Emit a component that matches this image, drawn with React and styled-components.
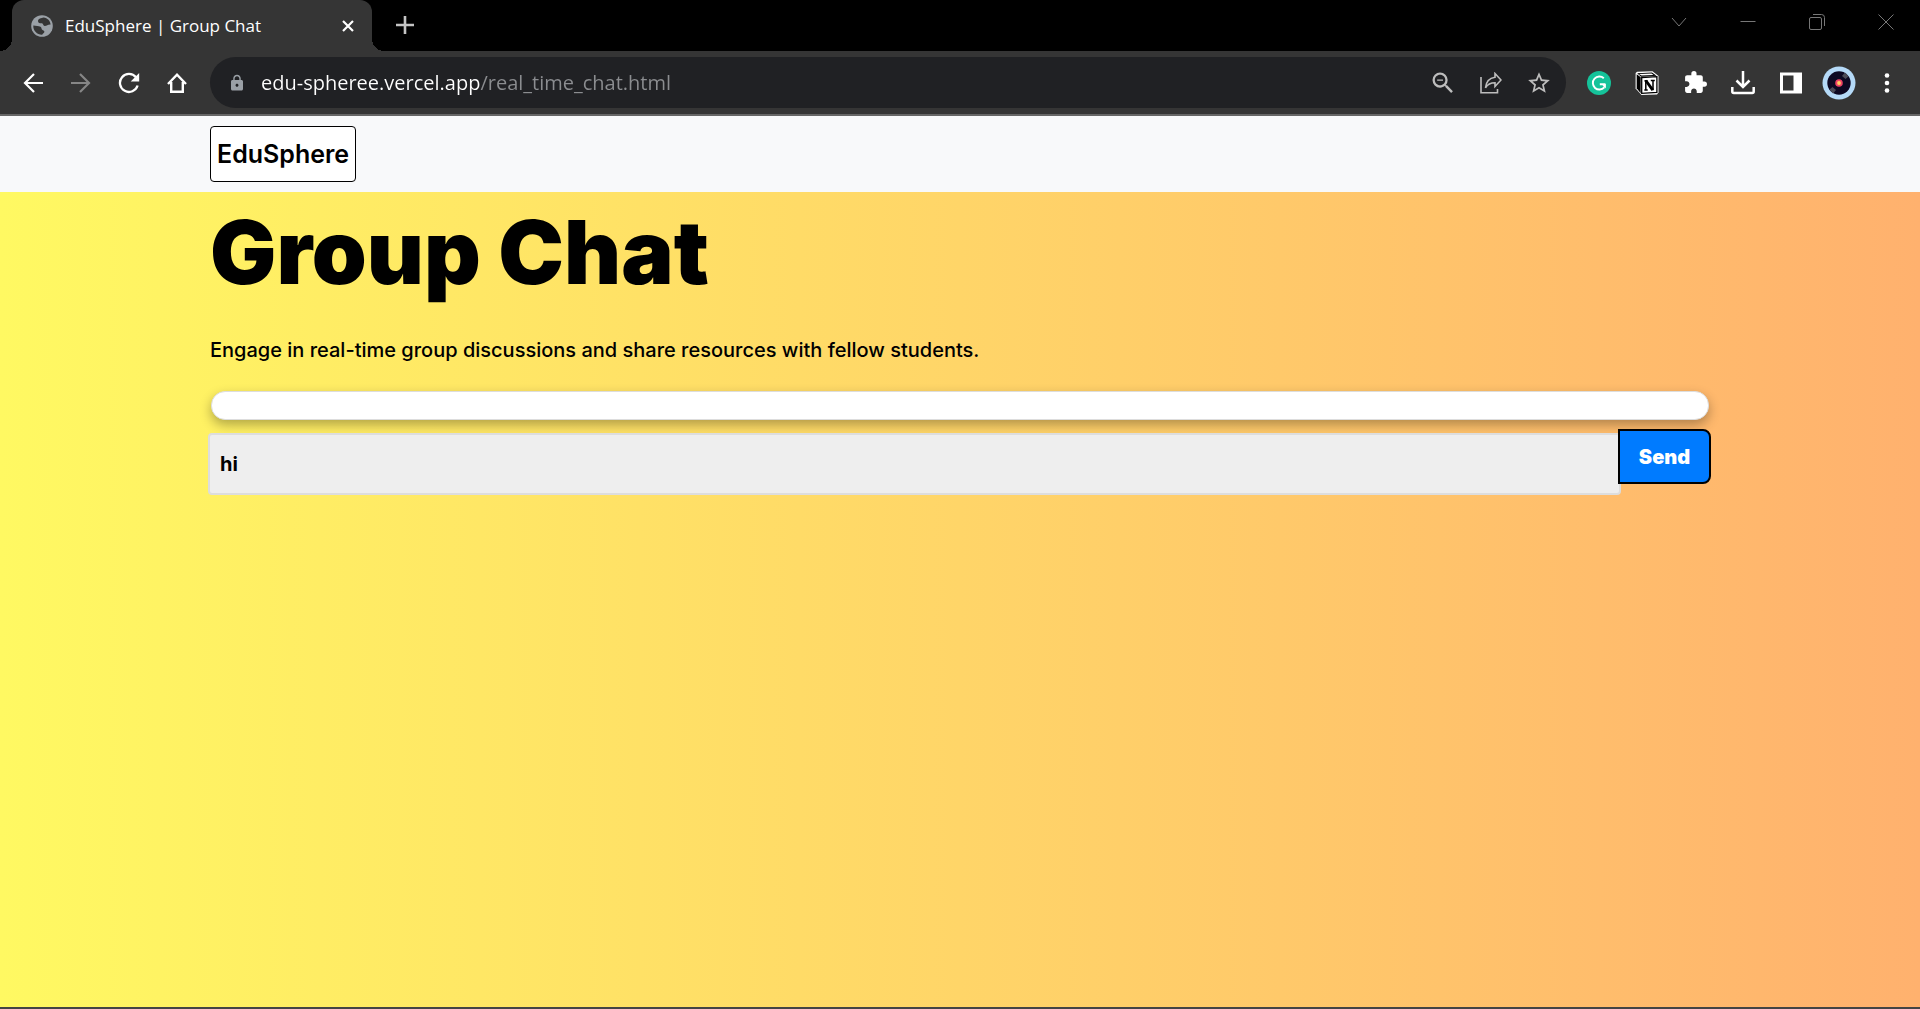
import React, { useState } from "react";
import styled, { createGlobalStyle, css } from "styled-components";
import {
    MdExtension,
    MdLock,
    MdRefresh,
    MdStarBorder,
    MdZoomOut,
} from "react-icons/md";

const URL_TEXT = "edu-spheree.vercel.app/real_time_chat.html";

function TabStrip() {
    return (
        <Strip>
            <Tab>
                <svg width="22" height="22" viewBox="0 0 22 22">
                    <circle cx="11" cy="11" r="10.800" fill="#9aa0a6" />
                    <path
                        d="M12.500 2.400c-2 .6-5.500 1-5.500 3.600 0 2 1.800 2.300 3.700 2.300 1.500 0 1.300 2.700 3 2.700 2.300 0 3-1.700 5.900-1.500C19.300 5.500 16.500 3 12.500 2.400z"
                        fill="#353535"
                    />
                    <path
                        d="M2.300 10.500c2.700.5 5.200.2 7.200 1.200 1.500.8.600 2.500 2 3.300 1.500.8 2.300 1 1.700 2.500-.4 1-1.700.8-1.900 2.200C6.500 20 2 16 2.300 10.500z"
                        fill="#353535"
                    />
                </svg>
                <span className="title">EduSphere | Group Chat</span>
                <IconButton $size={24} aria-label="Close tab">
                    <svg width="12" height="12" viewBox="0 0 12 12">
                        <path d="M1 1l10 10M11 1L1 11" stroke="#fff" strokeWidth="2.200" />
                    </svg>
                </IconButton>
            </Tab>
            <NewTab aria-label="New tab">
                <svg width="18" height="18" viewBox="0 0 18 18">
                    <path d="M9 0v18M0 9h18" stroke="#c4c4c4" strokeWidth="2.600" />
                </svg>
            </NewTab>
            <WindowControls>
                <button aria-label="Search tabs">
                    <svg width="16" height="16" viewBox="0 0 16 16">
                        <path d="M1 4l7 8 7-8" />
                    </svg>
                </button>
                <button aria-label="Minimize">
                    <svg width="16" height="16" viewBox="0 0 16 16">
                        <path d="M0.500 7.500h15" />
                    </svg>
                </button>
                <button aria-label="Restore">
                    <svg width="16" height="16" viewBox="0 0 16 16">
                        <rect x="0.500" y="3.500" width="12" height="12" rx="1.500" />
                        <path d="M4 0.500h8.500q3 0 3 3V12" />
                    </svg>
                </button>
                <button aria-label="Close">
                    <svg width="16" height="16" viewBox="0 0 16 16">
                        <path d="M0.500 0.500l15 15M15.500 0.500l-15 15" />
                    </svg>
                </button>
            </WindowControls>
        </Strip>
    );
}

function Toolbar() {
    const [url, setUrl] = useState(URL_TEXT);

    return (
        <Bar>
            <IconButton aria-label="Back">
                <svg width="20" height="20" viewBox="0 0 20 20" fill="none" stroke="#fff" strokeWidth="2.200">
                    <path d="M20 10H2M11 1l-9 9 9 9" />
                </svg>
            </IconButton>
            <IconButton aria-label="Forward">
                <svg width="20" height="20" viewBox="0 0 20 20" fill="none" stroke="#868686" strokeWidth="2.200">
                    <path d="M0 10h18M9 1l9 9-9 9" />
                </svg>
            </IconButton>
            <IconButton aria-label="Reload">
                <svg width="22" height="22" viewBox="0 0 22 22" fill="none">
                    <path d="M18 5.300A9 9 0 1 0 19.600 13.500" stroke="#fff" strokeWidth="2.300" />
                    <path d="M21.200 1v8.500h-8.500z" fill="#fff" />
                </svg>
            </IconButton>
            <IconButton aria-label="Home">
                <svg width="20" height="20" viewBox="0 0 20 20" fill="none" stroke="#fff" strokeWidth="2.400">
                    <path d="M1 11l9-9.300 9 9.300M4.200 9v9.700h11.600V9" />
                </svg>
            </IconButton>
            <AddressBar>
                <MdLock className="lock" size={18} />
                <input
                    aria-label="Address"
                    spellCheck="false"
                    value={url}
                    onChange={(e) => setUrl(e.target.value)}
                />
                <IconButton $muted aria-label="Zoom">
                    <MdZoomOut size={28} />
                </IconButton>
                <IconButton $muted aria-label="Share">
                    <svg width="22" height="22" viewBox="0 0 22 22" fill="none" stroke="#bdbdbd" strokeWidth="1.600">
                        <path d="M1 5v15.800h16.500V17" />
                        <path d="M15 1.500l6 6.500-6 6.500v-3.700c-4.500 0-7.500 1.700-9.500 5 .5-5.500 3.500-9.800 9.500-10.600z" />
                    </svg>
                </IconButton>
                <IconButton $muted aria-label="Bookmark">
                    <MdStarBorder size={26} />
                </IconButton>
            </AddressBar>
            <IconButton aria-label="Grammarly">
                <svg width="24" height="24" viewBox="0 0 24 24" fill="none">
                    <circle cx="12" cy="12" r="12" fill="#15c39a" />
                    <path d="M16.800 7.300a6.500 6.500 0 1 0 .5 9M12.800 13.300h4.700v3" stroke="#fff" strokeWidth="1.900" />
                    <path d="M14.500 13h4.300v4.500z" fill="#fff" />
                </svg>
            </IconButton>
            <IconButton aria-label="Notion">
                <svg width="24" height="24" viewBox="0 0 24 24">
                    <path d="M2 .8L17.500.3 23.500 5v16.500l-1.500 2-15.500.5L.6 17.500V2z" fill="#fff" />
                    <path d="M2.200 2.200l14.800-.6 4.600 3.200L6 5.700z" fill="#000" />
                    <path d="M4 2.900l12.500-.5 2 1.500L6.500 4.600z" fill="#fff" />
                    <path d="M1.700 3.200l4 3.100v15.900l-4-5z" fill="#000" />
                    <path d="M6.700 6.500l15.200-.8v15.700l-15.200.9z" fill="#fff" stroke="#000" strokeWidth="1.300" />
                    <path
                        d="M9.500 9.800h3M15.800 9.500h4M10.800 10v9M9.300 19h3.400M18 9.700v9.500"
                        fill="none"
                        stroke="#000"
                        strokeWidth="1.500"
                    />
                    <path d="M10.800 9.500l7 9.700" stroke="#000" strokeWidth="2.900" />
                </svg>
            </IconButton>
            <IconButton aria-label="Extensions">
                <MdExtension size={25} />
            </IconButton>
            <IconButton aria-label="Downloads">
                <svg width="24" height="24" viewBox="0 0 24 24" fill="none" stroke="#fff">
                    <path d="M12 0v15M5.500 9.500l6.500 6.500 6.500-6.500" strokeWidth="2.500" />
                    <path d="M1.300 16v4.500q0 1.500 1.500 1.500h18.400q1.500 0 1.500-1.500V16" strokeWidth="2.500" />
                </svg>
            </IconButton>
            <IconButton aria-label="Side panel">
                <svg width="22" height="22" viewBox="0 0 22 22">
                    <path d="M0 .5h22v21H0zM3 3.500v15h10.500v-15z" fill="#fff" fillRule="evenodd" />
                </svg>
            </IconButton>
            <IconButton aria-label="Profile">
                <svg width="34" height="34" viewBox="0 0 34 34">
                    <circle cx="17" cy="17" r="16.500" fill="#b5daf8" />
                    <circle cx="17" cy="17" r="11.700" fill="#0d0822" />
                    <path d="M20 10l3-3.500 3.500 4-3 2.500zM14 24l-3 3.500-3.500-4 3-2.500z" fill="#4b4b57" />
                    <circle cx="17" cy="17" r="3.800" fill="#ee4266" />
                    <circle cx="17" cy="17" r="1.900" fill="#ffd060" />
                </svg>
            </IconButton>
            <IconButton aria-label="Menu">
                <svg width="6" height="20" viewBox="0 0 6 20" fill="#fff">
                    <circle cx="3" cy="2.500" r="2.300" />
                    <circle cx="3" cy="10" r="2.300" />
                    <circle cx="3" cy="17.500" r="2.300" />
                </svg>
            </IconButton>
        </Bar>
    );
}

function GroupChat() {
    const [message, setMessage] = useState("hi");

    return (
        <Content>
            <Heading>Group Chat</Heading>
            <Lead>
                Engage in real-time group discussions and share resources with fellow students.
            </Lead>
            <Messages />
            <MessageForm onSubmit={(e) => e.preventDefault()}>
                <input
                    type="text"
                    aria-label="Message"
                    value={message}
                    onChange={(e) => setMessage(e.target.value)}
                />
                <button type="submit">Send</button>
            </MessageForm>
        </Content>
    );
}

export default function App() {
    return (
        <Page>
            <GlobalStyle />
            <TabStrip />
            <Toolbar />
            <Navbar>
                <Brand href="#">EduSphere</Brand>
            </Navbar>
            <GroupChat />
        </Page>
    );
}

const GlobalStyle = createGlobalStyle`
    * {
        box-sizing: border-box;
    }
    body {
        margin: 0;
        font-family: Inter, sans-serif;
        color: #000;
    }
    button {
        border: 0;
        padding: 0;
        background: none;
        font: inherit;
        cursor: pointer;
    }
    svg {
        display: block;
        flex: none;
    }
`;

/* keeps the content in a centred column of up to 1500px */
const gutter = css`
    padding-left: max(16px, calc((100% - 1500px) / 2));
    padding-right: max(16px, calc((100% - 1500px) / 2));
`;

const Page = styled.div`
    min-height: 100vh;
    display: flex;
    flex-direction: column;
    border-bottom: 2px solid #444;
`;

const Strip = styled.div`
    height: 51px;
    display: flex;
    background: #000;
    padding-left: 12px;
    font-family: "Open Sans", sans-serif;
`;

const Tab = styled.div`
    position: relative;
    width: 360px;
    display: flex;
    align-items: center;
    padding: 0 12px 0 19px;
    background: #353535;
    border-radius: 12px 12px 0 0;
    color: #fff;
    .title {
        flex: 1;
        padding-left: 12px;
        font-size: 17px;
        white-space: nowrap;
    }
    /* curved feet on both sides of the tab */
    &::before,
    &::after {
        content: "";
        position: absolute;
        bottom: 0;
        width: 12px;
        height: 12px;
    }
    &::before {
        right: 100%;
        background: radial-gradient(circle at 0 0, #000 12px, #353535 12px);
    }
    &::after {
        left: 100%;
        background: radial-gradient(circle at 100% 0, #000 12px, #353535 12px);
    }
`;

const IconButton = styled.button`
    width: ${({ $size }) => $size || 48}px;
    height: ${({ $size }) => $size || 48}px;
    flex: none;
    display: flex;
    align-items: center;
    justify-content: center;
    color: ${({ $muted }) => ($muted ? "#bdbdbd" : "#fff")};
`;

const NewTab = styled.button`
    margin-left: 24px;
    padding-bottom: 1px;
`;

const WindowControls = styled.div`
    margin-left: auto;
    display: flex;
    button {
        width: 69px;
        height: 43px;
        display: flex;
        align-items: center;
        justify-content: center;
    }
    svg {
        fill: none;
        stroke: #777;
    }
`;

const Bar = styled.div`
    height: 65px;
    display: flex;
    align-items: center;
    padding: 0 9px;
    background: #353535;
    border-bottom: 2px solid #666;
`;

const AddressBar = styled.div`
    flex: 1;
    min-width: 0;
    height: 51px;
    margin: 0 9px;
    padding: 0 3px 0 18px;
    display: flex;
    align-items: center;
    background: #202124;
    border-radius: 26px;
    .lock {
        color: #9aa0a6;
    }
    input {
        flex: 1;
        min-width: 0;
        height: 36px;
        margin-left: 15px;
        padding: 0;
        border: 0;
        outline: 0;
        font: 20px "Open Sans", sans-serif;
        /* the host is white, the path after it is dimmed */
        background: linear-gradient(to right, #fff 219px, #8b8d90 219px);
        background-clip: text;
        -webkit-text-fill-color: transparent;
        caret-color: #fff;
    }
`;

const Navbar = styled.nav`
    ${gutter}
    padding-top: 10px;
    padding-bottom: 10px;
    display: flex;
    background: #f8f9fa;
`;

const Brand = styled.a`
    height: 56px;
    padding: 0 6px;
    display: flex;
    align-items: center;
    background: #fff;
    border: 1px solid #000;
    border-radius: 4px;
    color: #000;
    font-size: 25px;
    font-weight: 600;
    text-decoration: none;
`;

const Content = styled.main`
    ${gutter}
    flex: 1;
    background: linear-gradient(to right, #fff962, #ffb16e);
`;

const Heading = styled.h1`
    margin: 0;
    padding-top: 12px;
    font-size: 88px;
    line-height: 96px;
    font-weight: 900;
`;

const Lead = styled.p`
    margin: 34px 0 25px;
    font-size: 20px;
    line-height: 32px;
    font-weight: 500;
`;

const Messages = styled.div`
    height: 29px;
    margin: 0 1px;
    background: #fff;
    border: 1px solid #ddd;
    border-radius: 14px;
    box-shadow: 0 5px 12px rgba(0, 0, 0, 0.3);
`;

const MessageForm = styled.form`
    margin: 9px -1px 0 -2px;
    display: flex;
    align-items: flex-start;
    input {
        flex: 1;
        min-width: 0;
        height: 62px;
        margin: 4px -3px 0 0;
        padding: 0 10px;
        border: 2px solid #ddd;
        border-radius: 4px;
        outline: 0;
        background: #eee;
        font: 700 20px Inter, sans-serif;
    }
    button {
        position: relative;
        width: 93px;
        height: 55px;
        background: #007bff;
        border: 2px solid #000;
        border-radius: 0 8px 8px 0;
        color: #fff;
        font-size: 20px;
        font-weight: 900;
    }
`;
